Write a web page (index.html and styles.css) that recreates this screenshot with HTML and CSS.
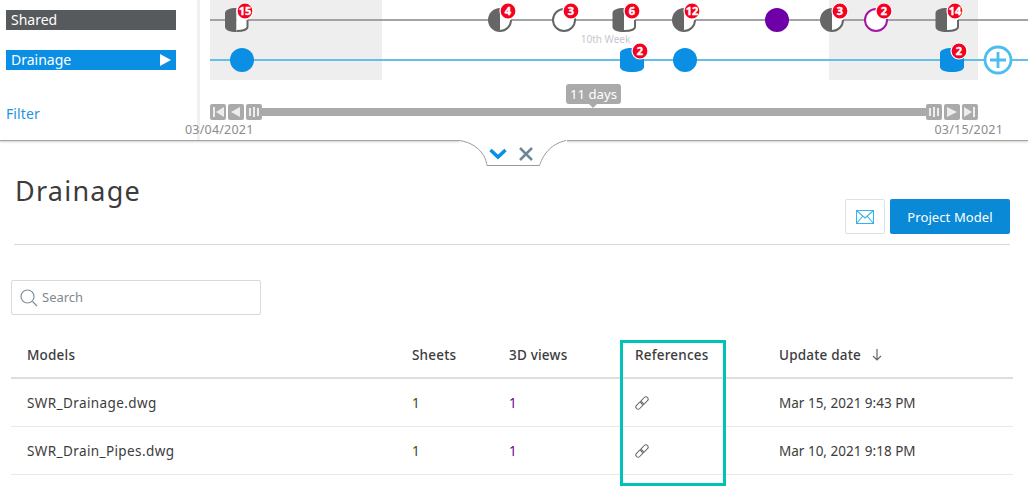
FILE: index.html
```html
<!DOCTYPE html>
<html lang="en">
<head>
<meta charset="utf-8">
<title>Drainage</title>
<link rel="stylesheet" href="styles.css">
</head>
<body>
<svg width="0" height="0" class="defs" aria-hidden="true">
  <defs>
    <g id="half">
      <circle r="11" class="wh"/>
      <path d="M0 -12A12 12 0 0 0 0 12Z" class="gy"/>
      <path d="M0 11A11 11 0 0 0 11 0" class="ln"/>
    </g>
    <g id="cyl">
      <path d="M0 -12C-7 -12 -11.500 -10 -11.500 -7V7C-11.500 10 -7 12 0 12Z" class="gy"/>
      <path d="M0 -11H6C9 -11 11 -9 11 -7V7C11 9.500 6 11 0 11Z" class="wh"/>
      <path d="M0 11C6 11 11 9.500 11 7V0" class="ln"/>
    </g>
    <path id="cylblue" d="M0 -12C-7 -12 -12 -10 -12 -7V7C-12 10 -7 12 0 12S12 10 12 7V-7C12 -10 7 -12 0 -12Z" class="bl"/>
    <g id="chain" transform="rotate(-45 7 7)">
      <rect x="-.750" y="4.750" width="8.500" height="4.500" rx="2.250" class="link-line"/>
      <rect x="6.250" y="4.750" width="8.500" height="4.500" rx="2.250" class="link-line"/>
    </g>
  </defs>
</svg>
<header class="top">
  <aside class="side">
    <div class="layer layer-shared">Shared</div>
    <div class="layer layer-drainage">Drainage<span class="tri"></span></div>
    <a class="filter">Filter</a>
  </aside>
  <svg class="timeline" viewBox="198 0 830 140" width="830" height="140">
    <rect x="210" y="0" width="172" height="80" class="band"/>
    <rect x="829" y="0" width="149" height="80" class="band"/>
    <rect x="210" y="19" width="818" height="2" class="track-gray"/>
    <rect x="210" y="59" width="818" height="2" class="track-blue"/>

    <use href="#cyl" x="236.500" y="20"/>
    <use href="#half" x="500" y="20"/>
    <circle cx="564" cy="20" r="11" class="open"/>
    <use href="#cyl" x="624" y="20"/>
    <use href="#half" x="684" y="20"/>
    <circle cx="777" cy="20" r="12" class="pu"/>
    <use href="#half" x="832" y="20"/>
    <circle cx="876" cy="20" r="11" class="open-pu"/>
    <use href="#cyl" x="947" y="20"/>

    <circle cx="242" cy="60" r="12" class="bl"/>
    <use href="#cylblue" x="632" y="60"/>
    <circle cx="685" cy="60" r="12" class="bl"/>
    <use href="#cylblue" x="952" y="60"/>
    <circle cx="998" cy="60" r="13" class="plus"/>
    <path d="M998 52V68M990 60H1006" class="plus"/>

    <g class="badges">
      <circle cx="245" cy="11" r="8"/><text x="245" y="15">15</text>
      <circle cx="508" cy="11" r="8"/><text x="508" y="15">4</text>
      <circle cx="571" cy="11" r="8"/><text x="571" y="15">3</text>
      <circle cx="632" cy="11" r="8"/><text x="632" y="15">6</text>
      <circle cx="692" cy="11" r="8"/><text x="692" y="15">12</text>
      <circle cx="840" cy="11" r="8"/><text x="840" y="15">3</text>
      <circle cx="884" cy="11" r="8"/><text x="884" y="15">2</text>
      <circle cx="955" cy="11" r="8"/><text x="955" y="15">14</text>
      <circle cx="640" cy="51" r="8"/><text x="640" y="55">2</text>
      <circle cx="959" cy="51" r="8"/><text x="959" y="55">2</text>
    </g>
    <text x="605.500" y="43" class="week">10th Week</text>

    <rect x="566" y="84" width="55" height="20" rx="3" class="sl"/>
    <path d="M589 104H597L593 108Z" class="sl"/>
    <text x="593.500" y="99" class="days">11 days</text>
    <rect x="258" y="108" width="670" height="8" class="sl"/>

    <g class="ctl">
      <rect x="210" y="104" width="16" height="16" rx="2"/>
      <rect x="228" y="104" width="16" height="16" rx="2"/>
      <rect x="246" y="104" width="16" height="16" rx="2"/>
      <rect x="926" y="104" width="16" height="16" rx="2"/>
      <rect x="944" y="104" width="16" height="16" rx="2"/>
      <rect x="962" y="104" width="16" height="16" rx="2"/>
    </g>
    <g class="ctl-glyph">
      <path d="M213 107h2v10h-2zM224 107v10l-8 -5z"/>
      <path d="M240 107v10l-9 -5z"/>
      <path d="M249 108h2v8h-2zM253 107h2v10h-2zM257 108h2v8h-2z"/>
      <path d="M929 108h2v8h-2zM933 107h2v10h-2zM937 108h2v8h-2z"/>
      <path d="M947 107v10l10 -5z"/>
      <path d="M964 107v10l8 -5zM973 107h2v10h-2z"/>
    </g>
    <text x="185" y="134" class="date">03/04/2021</text>
    <text x="934.500" y="134" class="date">03/15/2021</text>
  </svg>
</header>

<div class="notch">
  <svg width="108" height="27" viewBox="0 0 108 27">
    <path d="M0 .5C12 2 20 8 25 16C27 20 28 25 28 25.500H80.500C81 24 83 18 87 13C92 6 100 2 107 .5" class="notch-line"/>
    <path d="M31.500 10L39 17L46.500 10" class="chev"/>
    <path d="M61 8L73 20M73 8L61 20" class="cross"/>
  </svg>
</div>

<main class="main">
  <div class="head">
    <h1>Drainage</h1>
    <div class="actions">
      <button class="mail" aria-label="Email">
        <svg width="18" height="14" viewBox="0 0 18 14"><path d="M.500 .500H17.500V13.500H.500ZM.500 .500L9 8L17.500 .500M.500 13.500L6.500 6.500M17.500 13.500L11.500 6.500" class="mail-line"/></svg>
      </button>
      <button class="primary">Project Model</button>
    </div>
  </div>

  <div class="search">
    <svg width="18" height="18" viewBox="0 0 18 18"><circle cx="7.500" cy="7.500" r="6.500" class="search-line"/><path d="M12.500 12.500L17 17" class="search-line"/></svg>
    <span class="search-text">Search</span>
  </div>

  <div class="table">
    <div class="row row-head">
      <div>Models</div><div>Sheets</div><div>3D views</div><div>References</div>
      <div class="sort">Update date
        <svg width="10" height="12" viewBox="0 0 10 12"><path d="M5 0V11M1 7L5 11L9 7" class="arrow"/></svg>
      </div>
    </div>
    <div class="row">
      <div class="file">SWR_Drainage.dwg</div><div class="num-s">1</div><div class="num-v">1</div>
      <div><svg class="link" width="14" height="14" viewBox="0 0 14 14"><use href="#chain"/></svg></div>
      <div>Mar 15, 2021 9:43 PM</div>
    </div>
    <div class="row">
      <div class="file">SWR_Drain_Pipes.dwg</div><div class="num-s">1</div><div class="num-v">1</div>
      <div><svg class="link" width="14" height="14" viewBox="0 0 14 14"><use href="#chain"/></svg></div>
      <div>Mar 10, 2021 9:18 PM</div>
    </div>
  </div>
  <div class="highlight"></div>
</main>
</body>
</html>
```

FILE: styles.css
```css
* { box-sizing: border-box; }
html, body { margin: 0; height: 492px; overflow: hidden; background: #fff; }
body { font-family: "Noto Sans", "Open Sans", sans-serif; color: #3c3c3c; position: relative; }
.defs { position: absolute; }

/* top timeline panel */
.top {
  display: flex;
  height: 141px;
  border-bottom: 1px solid #a3a3a3;
  box-shadow: 0 1px 2px rgba(0,0,0,.18);
}
.side {
  flex: none;
  padding: 10px 22px 0 6px;
  border-right: 3px solid #f0f0f0;
  width: 200px;
  display: flex;
  flex-direction: column;
}
.layer { height: 20px; width: 170px; font-size: 14px; line-height: 20px; color: #fff; padding-left: 5px; position: relative; }
.layer-shared { background: #565a5c; }
.layer-drainage { background: #0a8fe4; margin-top: 20px; display: flex; justify-content: space-between; align-items: center; padding-right: 5px; }
.tri { border-left: 11px solid #fff; border-top: 6px solid transparent; border-bottom: 6px solid transparent; }
.filter { margin-top: 34px; font-size: 14px; line-height: 20px; color: #1f93dc; letter-spacing: .1px; }
.timeline { display: block; flex: none; margin-left: -2px; overflow: visible; }

.band { fill: #eeeeee; }
.track-gray { fill: #a1a3a6; }
.track-blue { fill: #62bfe8; }
.gy { fill: #666666; }
.wh { fill: #ffffff; }
.ln { fill: none; stroke: #666666; stroke-width: 2; }
.bl { fill: #0a8fe4; }
.pu { fill: #6f00a8; }
.open { fill: #fff; stroke: #666666; stroke-width: 2; }
.open-pu { fill: #fff; stroke: #a516a5; stroke-width: 2; }
.plus { fill: #fff; stroke: #4bbdf0; stroke-width: 2.800; }
path.plus { fill: none; }

.badges circle { fill: #f5001e; stroke: #fff; stroke-width: 1.200; }
.badges text { fill: #fff; font: 700 11px "Noto Sans", sans-serif; text-anchor: middle; stroke: #fff; stroke-width: .4; }
.week { fill: #c6c7cf; font-size: 10px; text-anchor: middle; }
.sl { fill: #aaaaaa; }
.days { fill: #fff; font-size: 13.200px; text-anchor: middle; }
.ctl rect { fill: #aaaaaa; }
.ctl-glyph path { fill: #ececec; }
.date { fill: #8b8b90; font-size: 12.500px; letter-spacing: .2px; }

/* notch */
.notch { position: absolute; left: 459px; top: 140px; width: 108px; height: 27px; background: #fff; }
.notch svg { display: block; }
.notch-line { fill: #fff; stroke: #9a9a9a; stroke-width: 1; }
.chev { fill: none; stroke: #0a8fe4; stroke-width: 3.500; }
.cross { fill: none; stroke: #6f8796; stroke-width: 2.500; }

/* main */
.main { padding: 0 15px 0 11px; position: relative; }
.head {
  margin: 0 3px 0 3px;
  height: 104px;
  border-bottom: 1px solid #d9d9d9;
  position: relative;
  display: flex;
  justify-content: space-between;
  align-items: flex-end;
  padding-bottom: 10px;
}
h1 { margin: 32px 0 0 1px; font-weight: 400; font-size: 27px; line-height: 36px; letter-spacing: 1.250px; color: #3c3c3c; align-self: flex-start; }
.actions { display: flex; gap: 5px; }
.mail { width: 40px; height: 35px; background: #fff; border: 1px solid #dde1e6; border-radius: 2px; padding: 0; display: flex; align-items: center; justify-content: center; }
.mail-line { fill: none; stroke: #36b3ee; stroke-width: 1.100; }
.primary { width: 120px; height: 35px; border: 0; background: #0a8ad6; color: #fff; border-radius: 2px; font: 400 13px "Noto Sans", sans-serif; letter-spacing: .1px; }

.search {
  margin-top: 35px;
  width: 250px;
  height: 35px;
  border: 1px solid #d3dae2;
  border-radius: 2px;
  display: flex;
  align-items: center;
  gap: 4px;
  padding-left: 8px;
  font-size: 13px;
  color: #808890;
}
.search svg { flex: none; }
.search-text { margin-top: -2px; }
.search-line { fill: none; stroke: #808f9b; stroke-width: 1.200; }

.table { margin-top: 25px; width: 1002px; }
.row {
  display: grid;
  grid-template-columns: 385px 97px 126px 144px 1fr;
  padding-left: 16px;
  height: 48px;
  align-items: center;
  border-bottom: 1px solid #e9e9e9;
  font-size: 13.500px;
  color: #3c3c3c;
}
.row-head { height: 39px; font-weight: 500; border-bottom: 2px solid #dedede; padding-bottom: 8px; letter-spacing: .2px; }
.sort { display: flex; align-items: center; gap: 11px; }
.file { letter-spacing: .4px; }
.arrow { fill: none; stroke: #666; stroke-width: 1.200; }
.num-s { color: #3b4a2c; }
.num-v { color: #6f00a8; }
.link { display: block; overflow: visible; }
.link-line { fill: none; stroke: #666; stroke-width: 1; }

.highlight { position: absolute; left: 620px; top: 199px; width: 106px; height: 146px; border: 3px solid #00c2b8; pointer-events: none; }
```
